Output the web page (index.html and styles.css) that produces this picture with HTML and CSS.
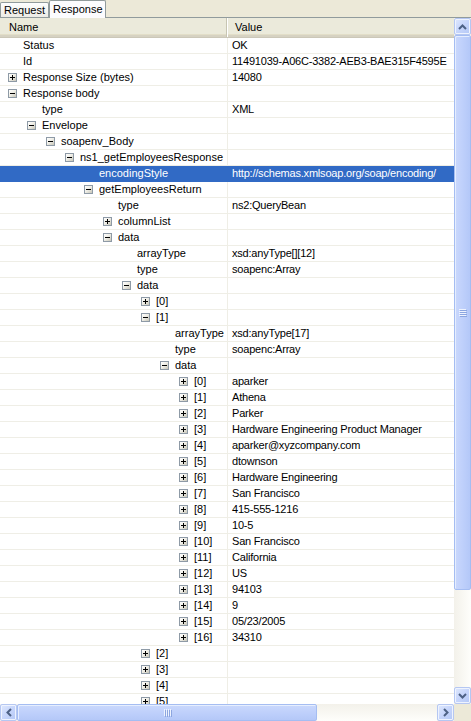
FILE: index.html
```html
<!DOCTYPE html>
<html>
<head>
<meta charset="utf-8">
<link rel="stylesheet" href="styles.css">
</head>
<body>
<div class="app">
  <div class="tabs">
    <div class="tab">Request</div>
    <div class="tab active">Response</div>
  </div>
  <div class="panel">
    <div class="main">
      <div class="viewport">
        <div class="header">
          <div class="hcell hname">Name</div>
          <div class="hcell hvalue">Value</div>
        </div>
        <div class="rows">
          <div class="row"><div class="name d0"><span class="tg none"></span>Status</div><div class="val">OK</div></div>
          <div class="row"><div class="name d0"><span class="tg none"></span>Id</div><div class="val">11491039-A06C-3382-AEB3-BAE315F4595E</div></div>
          <div class="row"><div class="name d0"><span class="tg plus"></span>Response Size (bytes)</div><div class="val">14080</div></div>
          <div class="row"><div class="name d0"><span class="tg minus"></span>Response body</div><div class="val"></div></div>
          <div class="row"><div class="name d1"><span class="tg none"></span>type</div><div class="val">XML</div></div>
          <div class="row"><div class="name d1"><span class="tg minus"></span>Envelope</div><div class="val"></div></div>
          <div class="row"><div class="name d2"><span class="tg minus"></span>soapenv_Body</div><div class="val"></div></div>
          <div class="row"><div class="name d3"><span class="tg minus"></span>ns1_getEmployeesResponse</div><div class="val"></div></div>
          <div class="row sel"><div class="name d4"><span class="tg none"></span>encodingStyle</div><div class="val">http://schemas.xmlsoap.org/soap/encoding/</div></div>
          <div class="row"><div class="name d4"><span class="tg minus"></span>getEmployeesReturn</div><div class="val"></div></div>
          <div class="row"><div class="name d5"><span class="tg none"></span>type</div><div class="val">ns2:QueryBean</div></div>
          <div class="row"><div class="name d5"><span class="tg plus"></span>columnList</div><div class="val"></div></div>
          <div class="row"><div class="name d5"><span class="tg minus"></span>data</div><div class="val"></div></div>
          <div class="row"><div class="name d6"><span class="tg none"></span>arrayType</div><div class="val">xsd:anyType[][12]</div></div>
          <div class="row"><div class="name d6"><span class="tg none"></span>type</div><div class="val">soapenc:Array</div></div>
          <div class="row"><div class="name d6"><span class="tg minus"></span>data</div><div class="val"></div></div>
          <div class="row"><div class="name d7"><span class="tg plus"></span>[0]</div><div class="val"></div></div>
          <div class="row"><div class="name d7"><span class="tg minus"></span>[1]</div><div class="val"></div></div>
          <div class="row"><div class="name d8"><span class="tg none"></span>arrayType</div><div class="val">xsd:anyType[17]</div></div>
          <div class="row"><div class="name d8"><span class="tg none"></span>type</div><div class="val">soapenc:Array</div></div>
          <div class="row"><div class="name d8"><span class="tg minus"></span>data</div><div class="val"></div></div>
          <div class="row"><div class="name d9"><span class="tg plus"></span>[0]</div><div class="val">aparker</div></div>
          <div class="row"><div class="name d9"><span class="tg plus"></span>[1]</div><div class="val">Athena</div></div>
          <div class="row"><div class="name d9"><span class="tg plus"></span>[2]</div><div class="val">Parker</div></div>
          <div class="row"><div class="name d9"><span class="tg plus"></span>[3]</div><div class="val">Hardware Engineering Product Manager</div></div>
          <div class="row"><div class="name d9"><span class="tg plus"></span>[4]</div><div class="val">aparker@xyzcompany.com</div></div>
          <div class="row"><div class="name d9"><span class="tg plus"></span>[5]</div><div class="val">dtownson</div></div>
          <div class="row"><div class="name d9"><span class="tg plus"></span>[6]</div><div class="val">Hardware Engineering</div></div>
          <div class="row"><div class="name d9"><span class="tg plus"></span>[7]</div><div class="val">San Francisco</div></div>
          <div class="row"><div class="name d9"><span class="tg plus"></span>[8]</div><div class="val">415-555-1216</div></div>
          <div class="row"><div class="name d9"><span class="tg plus"></span>[9]</div><div class="val">10-5</div></div>
          <div class="row"><div class="name d9"><span class="tg plus"></span>[10]</div><div class="val">San Francisco</div></div>
          <div class="row"><div class="name d9"><span class="tg plus"></span>[11]</div><div class="val">California</div></div>
          <div class="row"><div class="name d9"><span class="tg plus"></span>[12]</div><div class="val">US</div></div>
          <div class="row"><div class="name d9"><span class="tg plus"></span>[13]</div><div class="val">94103</div></div>
          <div class="row"><div class="name d9"><span class="tg plus"></span>[14]</div><div class="val">9</div></div>
          <div class="row"><div class="name d9"><span class="tg plus"></span>[15]</div><div class="val">05/23/2005</div></div>
          <div class="row"><div class="name d9"><span class="tg plus"></span>[16]</div><div class="val">34310</div></div>
          <div class="row"><div class="name d7"><span class="tg plus"></span>[2]</div><div class="val"></div></div>
          <div class="row"><div class="name d7"><span class="tg plus"></span>[3]</div><div class="val"></div></div>
          <div class="row"><div class="name d7"><span class="tg plus"></span>[4]</div><div class="val"></div></div>
          <div class="row"><div class="name d7"><span class="tg plus"></span>[5]</div><div class="val"></div></div>
        </div>
      </div>
      <div class="vscroll">
        <div class="sbtn"><svg width="9" height="6" viewBox="0 0 9 6"><polyline points="1,5 4.5,1.5 8,5" fill="none" stroke="#4d6185" stroke-width="2"/></svg></div>
        <div class="vthumb"><div class="vgrip"><i></i><i></i><i></i><i></i></div></div>
        <div class="vtrack"></div>
        <div class="sbtn"><svg width="9" height="6" viewBox="0 0 9 6"><polyline points="1,1 4.5,4.5 8,1" fill="none" stroke="#4d6185" stroke-width="2"/></svg></div>
      </div>
    </div>
    <div class="hbar">
      <div class="sbtn"><svg width="6" height="9" viewBox="0 0 6 9"><polyline points="5,1 1.5,4.5 5,8" fill="none" stroke="#4d6185" stroke-width="2"/></svg></div>
      <div class="hthumb"><div class="hgrip"><i></i><i></i><i></i><i></i></div></div>
      <div class="htrack"></div>
      <div class="sbtn"><svg width="6" height="9" viewBox="0 0 6 9"><polyline points="1,1 4.5,4.5 1,8" fill="none" stroke="#4d6185" stroke-width="2"/></svg></div>
      <div class="corner"></div>
    </div>
  </div>
</div>
</body>
</html>
```
FILE: styles.css
```css
html, body {
  margin: 0;
  padding: 0;
}
body {
  width: 471px;
  height: 721px;
  overflow: hidden;
  background: #ece9d8;
  font-family: "Liberation Sans", Arial, sans-serif;
  font-size: 11px;
  color: #000;
}
.app {
  display: flex;
  flex-direction: column;
  height: 721px;
}
.tabs {
  display: flex;
  align-items: flex-end;
  height: 17px;
  border-bottom: 1px solid #919b9c;
  background: #ece9d8;
}
.tab {
  height: 14px;
  line-height: 14px;
  padding: 0 3px 0 3px;
  border: 1px solid #919b9c;
  border-bottom: none;
  border-radius: 2px 2px 0 0;
  background: linear-gradient(#fefefe, #ecebe5);
  color: #000;
}
.tab.active {
  height: 17px;
  line-height: 17px;
  margin-bottom: -1px;
  background: #fcfcfe;
  padding: 0 2px 0 3px;
  position: relative;
}
.panel {
  display: flex;
  flex-direction: column;
  flex: 1;
  min-height: 0;
}
.main {
  display: flex;
  flex: 1;
  min-height: 0;
}
.viewport {
  flex: 1;
  min-width: 0;
  overflow: hidden;
  background: #fff;
  display: flex;
  flex-direction: column;
}
.header {
  display: grid;
  grid-template-columns: 227px 1fr;
  height: 20px;
  flex: none;
  box-sizing: border-box;
  background: #ebeadb;
  border-bottom: 1px solid #cbc7b8;
  box-shadow: inset 0 -2px 0 #d6d2c2, inset 0 -3px 0 #e2dec8;
}
.hcell {
  line-height: 18px;
  white-space: nowrap;
}
.hname {
  padding-left: 9px;
  border-right: 1px solid #c7c5b2;
  box-shadow: 1px 0 0 #fff;
}
.hvalue {
  padding-left: 8px;
}
.rows {
  flex: 1;
  overflow: hidden;
}
.row {
  display: grid;
  grid-template-columns: 227px 1fr;
  height: 16px;
  box-sizing: border-box;
  border-bottom: 1px solid #efeee6;
}
.name {
  display: flex;
  align-items: center;
  white-space: nowrap;
  overflow: hidden;
  line-height: 15px;
}
.val {
  border-left: 1px solid #efeee6;
  padding-left: 4px;
  line-height: 15px;
  white-space: nowrap;
  overflow: hidden;
  letter-spacing: -0.2px;
}
.row.sel {
  background: #316ac5;
  color: #fff;
  border-bottom-color: #316ac5;
}
.row.sel .val {
  border-left-color: #316ac5;
}
.d0 { padding-left: 8px; }
.d1 { padding-left: 27px; }
.d2 { padding-left: 46px; }
.d3 { padding-left: 65px; }
.d4 { padding-left: 84px; }
.d5 { padding-left: 103px; }
.d6 { padding-left: 122px; }
.d7 { padding-left: 141px; }
.d8 { padding-left: 160px; }
.d9 { padding-left: 179px; }
.tg {
  flex: none;
  width: 9px;
  height: 9px;
  margin-right: 6px;
  box-sizing: border-box;
  position: relative;
}
.tg.plus, .tg.minus {
  border: 1px solid #8e9aa6;
  background: linear-gradient(135deg, #ffffff 0%, #f0efe8 45%, #c8c6b8 100%);
}
.tg.plus::before, .tg.minus::before {
  content: "";
  position: absolute;
  left: 1px;
  top: 3px;
  width: 5px;
  height: 1px;
  background: #000;
}
.tg.plus::after {
  content: "";
  position: absolute;
  left: 3px;
  top: 1px;
  width: 1px;
  height: 5px;
  background: #000;
}
.vscroll {
  width: 17px;
  flex: none;
  display: flex;
  flex-direction: column;
  background: #f4f3ee;
}
.sbtn {
  width: 17px;
  height: 17px;
  flex: none;
  box-sizing: border-box;
  border: 1px solid #b5c7f2;
  border-radius: 2px;
  background: linear-gradient(135deg, #dfe8fd 0%, #c6d5fb 50%, #b4c8f6 100%);
  display: flex;
  align-items: center;
  justify-content: center;
  box-shadow: inset 0 0 0 1px #eef3fe;
}
.vthumb {
  height: 555px;
  flex: none;
  box-sizing: border-box;
  border: 1px solid #a5bdf2;
  border-radius: 2px;
  background: linear-gradient(90deg, #cad8fc 0%, #bfd0fb 50%, #b4c8f8 100%);
  box-shadow: inset 1px 1px 0 #e6eefe;
  display: flex;
  align-items: center;
  justify-content: center;
}
.vgrip {
  display: flex;
  flex-direction: column;
  gap: 1px;
}
.vgrip i {
  display: block;
  width: 7px;
  height: 1px;
  background: #eef3fe;
  box-shadow: 1px 1px 0 #8ca6e0;
}
.vtrack {
  flex: 1;
  background: linear-gradient(90deg, #f3f1ea, #fefefb);
}
.hbar {
  height: 17px;
  flex: none;
  display: flex;
  background: #f4f3ee;
}
.hthumb {
  width: 300px;
  flex: none;
  box-sizing: border-box;
  border: 1px solid #a5bdf2;
  border-radius: 2px;
  background: linear-gradient(#cad8fc 0%, #bfd0fb 50%, #b4c8f8 100%);
  box-shadow: inset 1px 1px 0 #e6eefe;
  display: flex;
  align-items: center;
  justify-content: center;
}
.hgrip {
  display: flex;
  gap: 1px;
}
.hgrip i {
  display: block;
  width: 1px;
  height: 7px;
  background: #eef3fe;
  box-shadow: 1px 1px 0 #8ca6e0;
}
.htrack {
  flex: 1;
  background: linear-gradient(#f3f1ea, #fefefb);
}
.corner {
  width: 17px;
  flex: none;
  background: #ece9d8;
}
```
